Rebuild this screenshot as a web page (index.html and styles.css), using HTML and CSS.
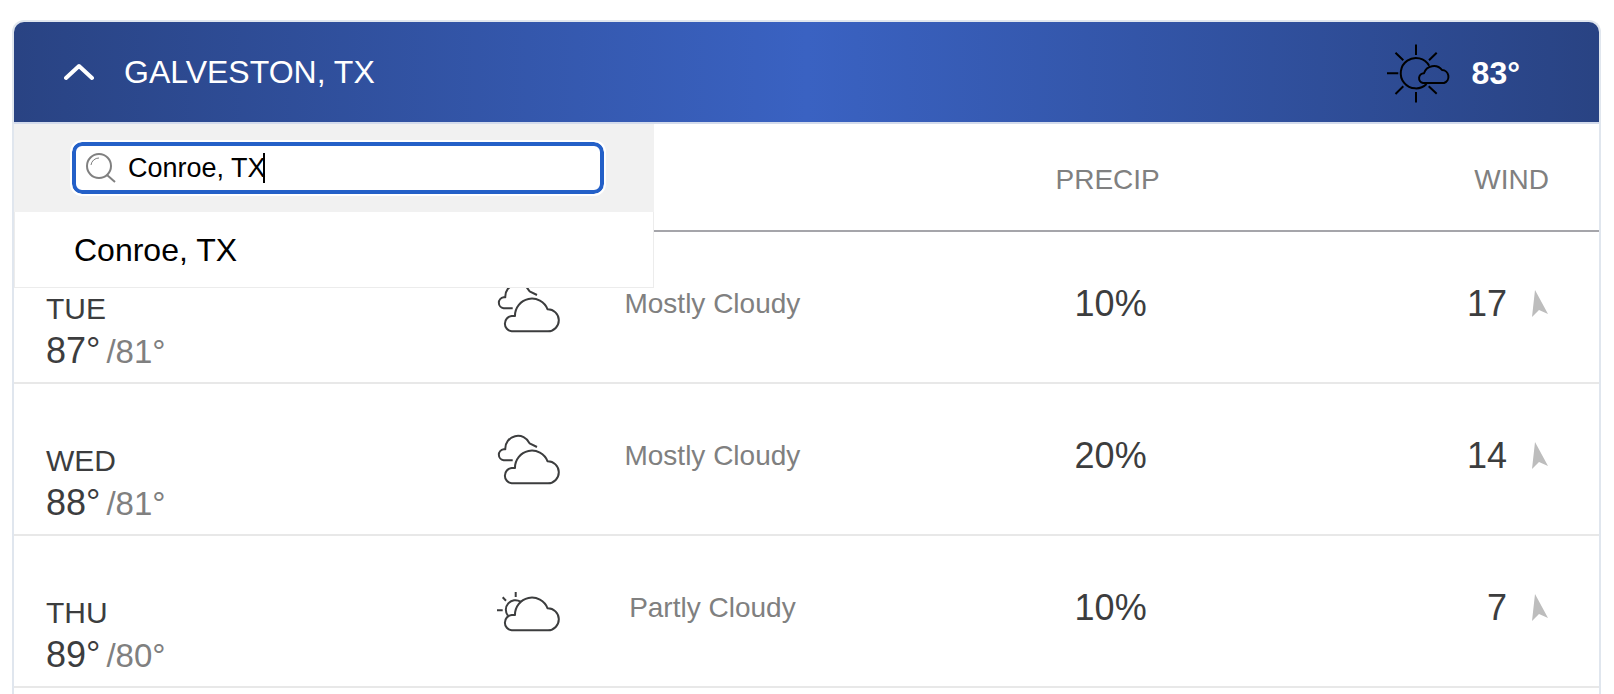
FILE: index.html
```html
<!DOCTYPE html>
<html lang="en">
<head>
<meta charset="utf-8">
<title>Galveston, TX forecast</title>
<link rel="stylesheet" href="styles.css">
</head>
<body>
<svg class="symbols" aria-hidden="true">
  <symbol id="mostly-cloudy" viewBox="0 0 64 64">
    <path d="M15.7 36.3H6.7A5.6 5.6 0 0 1 6.7 25.2H8.3A12.7 12.7 0 0 1 32.6 19.4L40 23"/>
    <path d="M14.7 59.3A7.7 7.7 0 0 1 14.7 44H18A16.9 16.9 0 0 1 50.6 37.3A11 11 0 0 1 51 59.3Z"/>
  </symbol>
  <symbol id="partly-cloudy" viewBox="0 0 64 64">
    <path d="M18.7 16V21M5.7 21.3L9 24.7M0 34.3H5.7M10.9 39.7A9.6 9.6 0 0 1 23.5 25.6"/>
    <path d="M14.7 54.3A7.7 7.7 0 0 1 14.7 39H18A16.9 16.9 0 0 1 50.6 32.3A11 11 0 0 1 51 54.3Z"/>
  </symbol>
  <symbol id="wind-arrow" viewBox="0 0 18 28">
    <path d="M4 0L17 24L8 20L1 27Z"/>
  </symbol>
</svg>
<main class="card">
  <header class="card-header">
    <button class="toggle" type="button" aria-expanded="true">
      <svg class="chevron" viewBox="0 0 30 20" aria-hidden="true"><path d="M2 16L15 4L28 16"/></svg>
      <span>GALVESTON, TX</span>
    </button>
    <div class="current">
      <svg class="weather-icon current-icon" viewBox="0 0 64 64" aria-hidden="true">
        <path d="M29 3.5V14M29 51V61.5M0 32.3H11.3M8.5 11.7L16.3 19.3M49.7 11.7L42 19.3M8.5 53L16.3 45.3M41.7 45.3L49.7 52.7"/>
        <path d="M42.2 24.8A15.2 15.2 0 1 0 39.6 43"/>
        <path d="M36 42A4.9 4.9 0 0 1 37 32.3A10.3 10.3 0 0 1 55 29A6.7 6.7 0 0 1 57 42Z"/>
      </svg>
      <span class="current-temp">83°</span>
    </div>
  </header>
  <div class="panel">
    <div class="picker">
      <div class="search-band">
        <label class="search">
          <svg class="search-icon" viewBox="0 0 30 30" aria-label="Search location"><circle cx="13" cy="13" r="12"/><path class="glint" d="M5 12A8 8 0 0 1 13 5"/><path d="M21 22L29 29"/></svg>
          <input class="search-input" type="text" value="Conroe, TX" aria-label="Search location">
          <span class="caret"></span>
        </label>
      </div>
      <ul class="results">
        <li><button class="result" type="button">Conroe, TX</button></li>
      </ul>
    </div>
    <table class="forecast">
      <colgroup><col class="col-day"><col class="col-icon"><col class="col-sky"><col class="col-precip"><col class="col-wind"></colgroup>
      <thead>
        <tr><th></th><th></th><th></th><th>PRECIP</th><th class="wind">WIND</th></tr>
      </thead>
      <tbody>
        <tr>
          <td class="day"><div class="day-name">TUE</div><div class="temps"><span class="high">87°</span><span class="low">/81°</span></div></td>
          <td><svg class="weather-icon"><use href="#mostly-cloudy"/></svg></td>
          <td class="sky">Mostly Cloudy</td>
          <td class="value precip">10%</td>
          <td class="value wind"><div class="wind-row">17<svg class="arrow"><use href="#wind-arrow"/></svg></div></td>
        </tr>
        <tr>
          <td class="day"><div class="day-name">WED</div><div class="temps"><span class="high">88°</span><span class="low">/81°</span></div></td>
          <td><svg class="weather-icon"><use href="#mostly-cloudy"/></svg></td>
          <td class="sky">Mostly Cloudy</td>
          <td class="value precip">20%</td>
          <td class="value wind"><div class="wind-row">14<svg class="arrow"><use href="#wind-arrow"/></svg></div></td>
        </tr>
        <tr>
          <td class="day"><div class="day-name">THU</div><div class="temps"><span class="high">89°</span><span class="low">/80°</span></div></td>
          <td><svg class="weather-icon"><use href="#partly-cloudy"/></svg></td>
          <td class="sky">Partly Cloudy</td>
          <td class="value precip">10%</td>
          <td class="value wind"><div class="wind-row">7<svg class="arrow"><use href="#wind-arrow"/></svg></div></td>
        </tr>
      </tbody>
    </table>
  </div>
</main>
</body>
</html>
```
FILE: styles.css
```css
* { box-sizing: border-box; }
body {
  margin: 0;
  padding: 20px 13px 0 12px;
  background: #fff;
  color: #3c3d3e;
  font-family: "Liberation Sans", Arial, sans-serif;
}
button, input { font-family: inherit; margin: 0; padding: 0; border: 0; background: none; }
.symbols { position: absolute; width: 0; height: 0; }
.card {
  min-height: calc(100vh - 20px);
  border: 2px solid #e0e6ee;
  border-bottom: 0;
  border-radius: 12px 12px 0 0;
}
.card-header {
  display: flex;
  align-items: center;
  justify-content: space-between;
  height: 102px;
  padding: 0 79px 0 50px;
  border-bottom: 2px solid #d3dbec;
  border-radius: 10px 10px 0 0;
  background: linear-gradient(90deg, #294383, #3a62c2 50%, #294383) padding-box;
  color: #fff;
  font-size: 32px;
}
.toggle { display: flex; align-items: center; gap: 30px; color: #fff; font-size: 32px; }
.chevron { width: 30px; height: 20px; fill: none; stroke: #fff; stroke-width: 4; stroke-linecap: round; stroke-linejoin: round; }
.current { display: flex; align-items: center; gap: 21px; padding-top: 2px; }
.current-temp { font-weight: bold; }
.weather-icon {
  display: block;
  width: 64px;
  height: 64px;
  margin: 0 auto;
  fill: none;
  stroke: #3c3d3e;
  stroke-width: 2;
  stroke-linejoin: round;
  overflow: visible;
}
.current-icon { stroke: #000; }
.panel { position: relative; }
.picker { position: absolute; top: 0; left: 0; width: 640px; color: #000; }
.search-band { padding: 18px 50px 18px 58px; background: #f1f1f1; }
.search {
  position: relative;
  display: flex;
  align-items: center;
  gap: 12px;
  height: 52px;
  padding: 0 10px;
  border: 4px solid #2460c8;
  border-radius: 10px;
  outline: 2px solid #fff;
  background: #fff;
}
.search-icon { flex: none; width: 30px; height: 30px; fill: none; stroke: #808080; stroke-width: 2; }
.glint { stroke-width: 1; }
.search-input { flex: 1; min-width: 0; outline: 0; color: #000; font-size: 27px; }
.caret { position: absolute; left: 187px; top: 7px; width: 2px; height: 30px; background: #000; }
.results { margin: 0; padding: 0; list-style: none; border: 1px solid #ececec; border-top: 0; background: #fff; }
.result { display: block; width: 100%; height: 75px; padding: 2px 0 0 59px; color: #000; font-size: 32px; text-align: left; }
.forecast { width: 100%; table-layout: fixed; border-collapse: separate; border-spacing: 0; text-align: center; }
.col-day { width: 28%; }
.col-icon { width: 9%; }
.col-sky { width: 14%; }
.col-precip { width: 36%; }
.forecast th { height: 108px; padding: 6px 0 0; border-bottom: 2px solid #a5a5aa; color: #808080; font-size: 28px; font-weight: normal; }
.forecast td { height: 152px; padding: 0 0 6px; border-bottom: 2px solid #e8e8e8; }
.forecast .day { padding: 56px 0 0 32px; text-align: left; vertical-align: top; line-height: 42px; }
.day-name { font-size: 30px; }
.temps { display: flex; align-items: baseline; gap: 6px; }
.high { font-size: 36px; }
.low { color: #808080; font-size: 33px; }
.forecast .sky { padding-left: 2px; color: #808080; font-size: 28px; white-space: nowrap; }
.value { font-size: 36px; }
.forecast .precip { padding-left: 6px; }
.forecast .wind { padding-right: 50px; text-align: right; }
.wind-row { display: flex; align-items: center; justify-content: flex-end; gap: 24px; }
.arrow { width: 18px; height: 28px; fill: #bdbdbd; }
```
